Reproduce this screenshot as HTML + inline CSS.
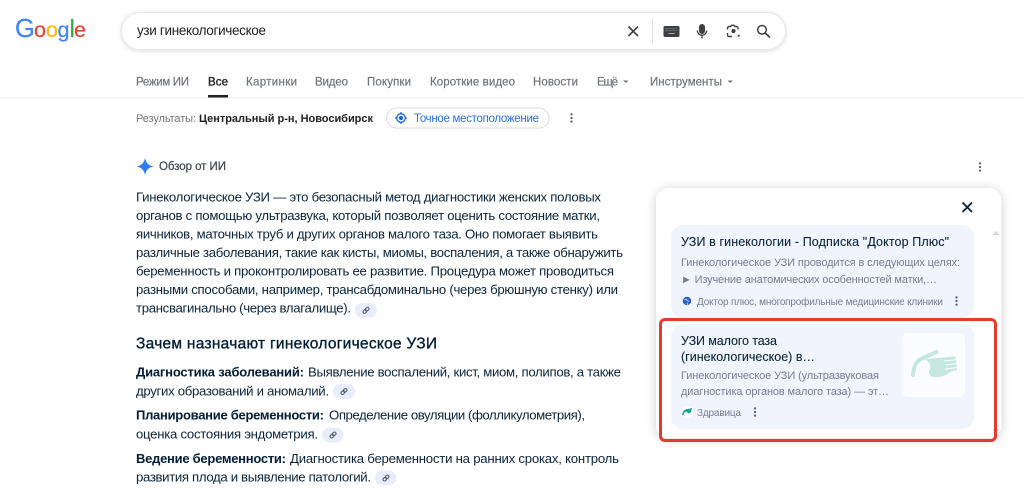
<!DOCTYPE html>
<html lang="ru"><head><meta charset="utf-8"><title>узи гинекологическое</title>
<style>
html,body{margin:0;padding:0;background:#fff;width:1024px;height:489px;overflow:hidden}
svg{display:block;filter:blur(.3px)}
text{font-family:"Liberation Sans",sans-serif;white-space:pre}
.b{font-size:13.2px;fill:#0b2438}
.h{font-size:15.5px;fill:#001d35;stroke:#001d35;stroke-width:.35px}
.s{font-size:13px;fill:#001d35;font-weight:700}
.t{font-size:11.5px;fill:#70757a;stroke:#70757a;stroke-width:.2px}
.ct{font-size:12.5px;fill:#0b2438;stroke:#0b2438;stroke-width:.1px}
.cd{font-size:11px;fill:#767d8e}
.src{font-size:10px;fill:#767d8e}
</style></head><body>
<svg width="1024" height="489" viewBox="0 0 1024 489" xmlns="http://www.w3.org/2000/svg">
<defs>
<filter id="sh1" x="-5%" y="-30%" width="110%" height="170%"><feDropShadow dx="0" dy="1" stdDeviation="2" flood-color="#202124" flood-opacity=".16"/></filter>
<filter id="sh2" x="-10%" y="-10%" width="120%" height="120%"><feDropShadow dx="0" dy="1" stdDeviation="5" flood-color="#202124" flood-opacity=".2"/></filter>
<g id="dots"><circle cx="0" cy="-3.6" r="1.15"/><circle cx="0" cy="0" r="1.15"/><circle cx="0" cy="3.6" r="1.15"/></g>
<g id="lnk" transform="rotate(-45)" fill="none" stroke="#5a6270" stroke-width="1.100"><rect x="-3.600" y="-1.500" width="4" height="3" rx="1.500"/><rect x="-.4" y="-1.500" width="4" height="3" rx="1.500"/></g>
</defs>

<!-- logo -->
<g font-family="Liberation Sans" stroke-width=".25">
<text x="15" y="37" font-size="25.500" fill="#4285F4" stroke="#4285F4">G</text>
<text x="34" y="37" font-size="21.500" fill="#EA4335" stroke="#EA4335">o</text>
<text x="46" y="37" font-size="21.500" fill="#FBBC05" stroke="#FBBC05">o</text>
<text x="57.500" y="37" font-size="21.500" fill="#4285F4" stroke="#4285F4">g</text>
<text x="69.500" y="37" font-size="25" fill="#34A853" stroke="#34A853">l</text>
<text x="74" y="37" font-size="21.500" fill="#EA4335" stroke="#EA4335">e</text>
</g>

<!-- search bar -->
<rect x="121.500" y="12.500" width="664" height="37" rx="18.500" fill="#fff" stroke="#e6e7ea" filter="url(#sh1)"/>
<text x="137" y="35" font-size="13.500" fill="#202124" textLength="129">узи гинекологическое</text>
<path d="M628.500 26.500 L638 36 M638 26.500 L628.500 36" stroke="#3c4043" stroke-width="1.600" fill="none"/>
<rect x="652" y="19" width="1" height="24" fill="#dadce0"/>
<rect x="663.500" y="26" width="16" height="11" rx="1.500" fill="#3c4043"/>
<path d="M665.500 28.500h12M665.500 30.500h12" stroke="#a9acb0" stroke-width=".8" stroke-dasharray="1 1"/>
<rect x="668.500" y="33" width="6" height="1" fill="#a9acb0"/>
<rect x="699" y="24" width="6" height="10" rx="3" fill="#3c4043"/>
<path d="M697.300 30.500 a4.700 4.700 0 0 0 9.400 0 M702 35 V38.500" stroke="#3c4043" stroke-width="1.300" fill="none"/>
<path d="M727.500 29.500 v-1.500 a1.500 1.500 0 0 1 1.500 -1.500 h1.500 l1 -1.200 h2.500 l1 1.200 h1.500 a1.500 1.500 0 0 1 1.500 1.500 v1.500 M727.500 33 v2 a1.500 1.500 0 0 0 1.500 1.500 h3" stroke="#3c4043" stroke-width="1.400" fill="none"/>
<circle cx="733.500" cy="31" r="2.100" fill="#3c4043"/><circle cx="738.700" cy="35.700" r="1.100" fill="#3c4043"/>
<circle cx="762" cy="29.800" r="4.300" stroke="#3c4043" stroke-width="1.500" fill="none"/>
<path d="M765.200 33 L770 37.500" stroke="#3c4043" stroke-width="1.700"/>

<!-- tabs -->
<text class="t" x="136" y="85.500" textLength="53">Режим ИИ</text>
<text class="t" x="208" y="85.500" textLength="20" style="fill:#202124;stroke:#202124;stroke-width:.35px">Все</text>
<text class="t" x="246" y="85.500" textLength="51">Картинки</text>
<text class="t" x="315" y="85.500" textLength="33">Видео</text>
<text class="t" x="367" y="85.500" textLength="44">Покупки</text>
<text class="t" x="430" y="85.500" textLength="85">Короткие видео</text>
<text class="t" x="533" y="85.500" textLength="45">Новости</text>
<text class="t" x="597" y="85.500" textLength="21">Ещё</text>
<path d="M623 80.500h5.500l-2.750 2.500z" fill="#70757a"/>
<text class="t" x="650" y="85.500" textLength="72">Инструменты</text>
<path d="M727.500 80.500h5.500l-2.750 2.500z" fill="#70757a"/>
<rect x="0" y="97.500" width="1024" height="1" fill="#ebebeb"/>
<rect x="208" y="95" width="20" height="2.500" fill="#202124"/>

<!-- location -->
<text x="136" y="122" font-size="11" fill="#70757a" textLength="60">Результаты:</text>
<text x="199" y="122" font-size="11" font-weight="700" fill="#202124" textLength="174">Центральный р-н, Новосибирск</text>
<rect x="386.500" y="108" width="162.500" height="20" rx="10" fill="#fff" stroke="#dadce0"/>
<circle cx="401" cy="118" r="4.300" fill="none" stroke="#1a62d6" stroke-width="1.300"/>
<circle cx="401" cy="118" r="2.200" fill="#1a62d6"/>
<path d="M401 112v1.500M401 122.500v1.500M395 118h1.500M405.500 118h1.500" stroke="#1a62d6" stroke-width="1.200"/>
<text x="414" y="122" font-size="11.500" fill="#2a6fdc" textLength="125">Точное местоположение</text>
<use href="#dots" x="571.500" y="118" fill="#5f6368"/>

<!-- AI overview header -->
<path d="M145 158 C146 163 148.500 165.500 153.500 166.500 C148.500 167.500 146 170 145 175 C144 170 141.500 167.500 136.500 166.500 C141.500 165.500 144 163 145 158Z" fill="#2f7cf0"/>
<text x="159" y="170" font-size="11.500" fill="#3c4350" stroke="#3c4350" stroke-width=".2" textLength="67">Обзор от ИИ</text>
<use href="#dots" x="980" y="167" fill="#5f6368"/>

<!-- body -->
<text class="b" x="136" y="201.500" textLength="465">Гинекологическое УЗИ — это безопасный метод диагностики женских половых</text>
<text class="b" x="136" y="220" textLength="464">органов с помощью ультразвука, который позволяет оценить состояние матки,</text>
<text class="b" x="136" y="238.500" textLength="462">яичников, маточных труб и других органов малого таза. Оно помогает выявить</text>
<text class="b" x="136" y="257" textLength="487">различные заболевания, такие как кисты, миомы, воспаления, а также обнаружить</text>
<text class="b" x="136" y="275.500" textLength="478">беременность и проконтролировать ее развитие. Процедура может проводиться</text>
<text class="b" x="136" y="294" textLength="482">разными способами, например, трансабдоминально (через брюшную стенку) или</text>
<text class="b" x="136" y="312.500" textLength="215">трансвагинально (через влагалище).</text>
<rect x="355" y="303" width="22" height="14.500" rx="7.250" fill="#e8edfb"/>
<use href="#lnk" x="366" y="310.300"/>

<text class="h" x="136" y="348.500" textLength="301">Зачем назначают гинекологическое УЗИ</text>

<text class="s" x="136" y="376.500" textLength="168">Диагностика заболеваний:</text>
<text class="b" x="308" y="376.500" textLength="313">Выявление воспалений, кист, миом, полипов, а также</text>
<text class="b" x="136" y="395.500" textLength="193">других образований и аномалий.</text>
<rect x="333" y="384" width="22" height="15" rx="7.500" fill="#e8edfb"/>
<use href="#lnk" x="344" y="391.500"/>

<text class="s" x="136" y="419.500" textLength="188">Планирование беременности:</text>
<text class="b" x="329" y="419.500" textLength="256">Определение овуляции (фолликулометрия),</text>
<text class="b" x="136" y="438.500" textLength="182">оценка состояния эндометрия.</text>
<rect x="322" y="427.500" width="21.500" height="15" rx="7.500" fill="#e8edfb"/>
<use href="#lnk" x="333" y="435"/>

<text class="s" x="136" y="463" textLength="150">Ведение беременности:</text>
<text class="b" x="290" y="463" textLength="329">Диагностика беременности на ранних сроках, контроль</text>
<text class="b" x="136" y="481.500" textLength="235">развития плода и выявление патологий.</text>
<rect x="375" y="470.500" width="21.500" height="15" rx="7.500" fill="#e8edfb"/>
<use href="#lnk" x="386" y="478"/>

<!-- panel -->
<rect x="656" y="188" width="345.500" height="250" rx="13" fill="#fff" filter="url(#sh2)"/>
<path d="M962.500 202.500 L972 212 M972 202.500 L962.500 212" stroke="#0b2239" stroke-width="1.800"/>
<path d="M992.500 235 L996 231 L999.500 235z" fill="#d5d7da"/>
<path d="M992.500 429 L996 433 L999.500 429z" fill="#d5d7da"/>

<!-- card 1 -->
<rect x="671" y="225" width="303" height="93" rx="12" fill="#f0f4fd"/>
<text class="ct" x="681" y="246" textLength="268">УЗИ в гинекологии - Подписка "Доктор Плюс"</text>
<text class="cd" x="681" y="266" textLength="279">Гинекологическое УЗИ проводится в следующих целях:</text>
<text class="cd" x="681" y="283" textLength="256">► Изучение анатомических особенностей матки,…</text>
<circle cx="687" cy="301" r="4.200" fill="#2a62c9"/>
<path d="M684.500 299.500 q2 -1 2.500 1 l2 1 M687 303 l1 2" stroke="#dbe6fb" stroke-width=".9" fill="none"/>
<text class="src" x="697" y="305" textLength="246">Доктор плюс, многопрофильные медицинские клиники</text>
<use href="#dots" x="956.500" y="301" fill="#545d7e"/>

<!-- card 2 -->
<rect x="671" y="324" width="303" height="105" rx="12" fill="#f0f4fd"/>
<text class="ct" x="681" y="345" textLength="96">УЗИ малого таза</text>
<text class="ct" x="681" y="361" textLength="134">(гинекологическое) в…</text>
<text class="cd" x="681" y="379" textLength="198">Гинекологическое УЗИ (ультразвуковая</text>
<text class="cd" x="681" y="395" textLength="208">диагностика органов малого таза) — эт…</text>
<rect x="902" y="333" width="63" height="64" rx="6" fill="#fbfcfd"/>
<path d="M913 375 C913.500 366 917 360 923 358 L936.500 352" fill="none" stroke="#c4e7de" stroke-width="4" stroke-linecap="round"/>
<path d="M925 359 L955.500 356.500 L957 370 L950 372 C946 376 938 378 933 377 C929 376 928 372 930 369 C931 365 929 362 925 359Z" fill="#c4e7de"/>
<path d="M944 361 L958 359.500 M945 365 L958 363.500 M945 369 L958 367.500" stroke="#fbfcfd" stroke-width=".9"/>
<circle cx="687" cy="412" r="6" fill="#fff"/>
<path d="M682 415 C683 410 685 409 688 409 L692 408 L691 412 C689 414 687.500 414 687 412 C686 411 684 412 683.500 415Z" fill="#14a594"/>
<text class="src" x="697" y="416" textLength="44">Здравица</text>
<use href="#dots" x="755" y="412" fill="#545d7e"/>

<!-- red highlight -->
<rect x="660.500" y="319.500" width="335" height="121" rx="4.500" fill="none" stroke="#e53b2f" stroke-width="3"/>
</svg>
</body></html>
